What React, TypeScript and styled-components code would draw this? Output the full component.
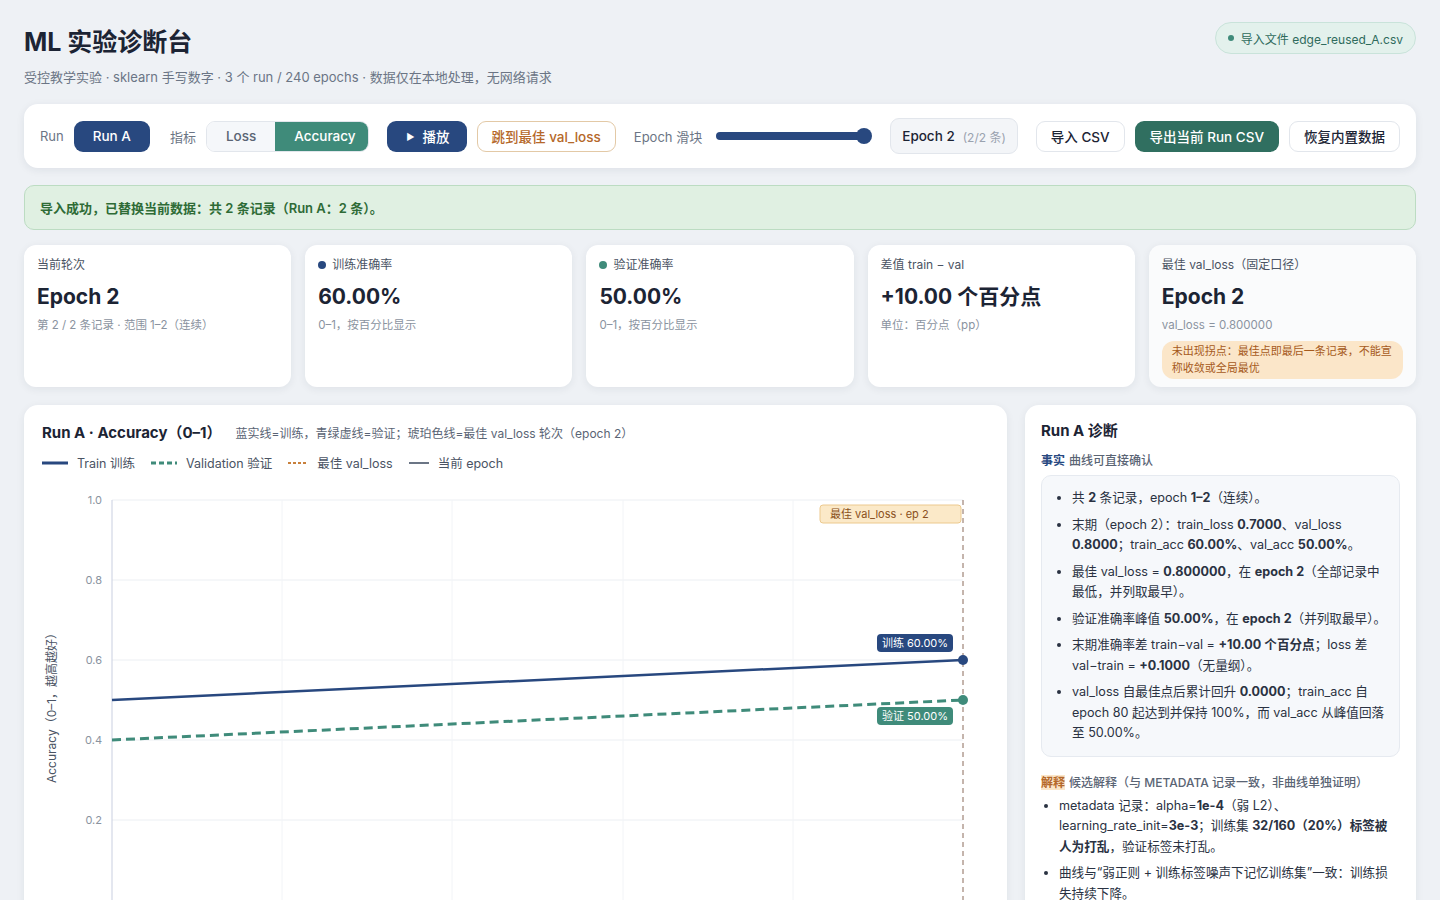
import React from "react";
import styled, { createGlobalStyle } from "styled-components";

const Global = createGlobalStyle`
  html, body { margin: 0; padding: 0; background: #eef1f5; height: 900px; overflow: hidden; }
  body { font-family: Inter, "Noto Sans CJK SC", sans-serif; color: #1c2434; }
  * { box-sizing: border-box; }
`;

const Page = styled.div`
  padding: 26px 24px 0 24px;
  display: flex;
  flex-direction: column;
`;
const Header = styled.div`
  display: flex;
  justify-content: space-between;
  align-items: flex-start;
`;
const Title = styled.h1`
  margin: 0;
  font-size: 25px;
  font-weight: 700;
  color: #1c2434;
  line-height: 32px;
`;
const Sub = styled.div`
  margin-top: 10px;
  font-size: 13px;
  line-height: 18px;
  color: #6b7585;
`;
const FilePill = styled.div`
  margin-top: -4px;
  display: flex;
  align-items: center;
  gap: 7px;
  height: 32px;
  padding: 0 12px;
  border-radius: 16px;
  background: #e3f1ec;
  border: 1px solid #c9e3da;
  font-size: 12px;
  color: #2f6b5c;
`;
const Dot = styled.span<{ c: string; s?: number }>`
  display: inline-block;
  width: ${(p) => p.s ?? 7}px;
  height: ${(p) => p.s ?? 7}px;
  border-radius: 50%;
  background: ${(p) => p.c};
`;
const Toolbar = styled.div`
  margin-top: 18px;
  height: 64px;
  background: #fff;
  border-radius: 14px;
  box-shadow: 0 2px 8px rgba(30, 40, 60, 0.08);
  display: flex;
  align-items: center;
  padding: 0 16px;
  gap: 10px;
`;
const Label = styled.span<{ ml?: number }>`
  font-size: 13px;
  color: #6b7585;
  white-space: nowrap;
  margin-left: ${(p) => p.ml ?? 0}px;
`;
const Btn = styled.button<{ v: "navy" | "amber" | "white" | "green" | "chip" }>`
  height: 31px;
  padding: 0 14px;
  border-radius: 9px;
  font-family: inherit;
  font-size: 13.5px;
  font-weight: 500;
  white-space: nowrap;
  border: 1px solid
    ${(p) =>
      p.v === "amber" ? "#e3c9a6" : p.v === "white" || p.v === "chip" ? "#e2e6ec" : "transparent"};
  background: ${(p) =>
    p.v === "navy" ? "#28487f" : p.v === "green" ? "#306f60" : p.v === "chip" ? "#f3f5f8" : "#fff"};
  color: ${(p) =>
    p.v === "navy" || p.v === "green" ? "#fff" : p.v === "amber" ? "#b5682a" : "#1c2434"};
  display: flex;
  align-items: center;
  gap: 8px;
`;
const Seg = styled.div`
  display: flex;
  border: 1px solid #e2e6ec;
  border-radius: 9px;
  overflow: hidden;
  height: 31px;
`;
const SegItem = styled.div<{ on?: boolean }>`
  padding: 0 19px;
  display: flex;
  align-items: center;
  font-size: 13.5px;
  font-weight: 500;
  background: ${(p) => (p.on ? "#3f8b7a" : "#f5f7fa")};
  color: ${(p) => (p.on ? "#fff" : "#5a6474")};
`;
const Slider = styled.div`
  position: relative;
  width: 156px;
  height: 8px;
  border-radius: 4px;
  background: #28487f;
  margin: 0 4px 0 4px;
`;
const Thumb = styled.div`
  position: absolute;
  right: -6px;
  top: -4px;
  width: 16px;
  height: 16px;
  border-radius: 50%;
  background: #28487f;
`;
const Muted = styled.span`
  color: #9aa2af;
  font-weight: 400;
  font-size: 12px;
`;
const Alert = styled.div`
  margin-top: 17px;
  height: 45px;
  background: #e0f0e2;
  border: 1px solid #bcdcc2;
  border-radius: 10px;
  display: flex;
  align-items: center;
  padding: 0 15px;
  font-size: 13px;
  font-weight: 600;
  color: #2e6b36;
`;
const Metrics = styled.div`
  margin-top: 15px;
  display: grid;
  grid-template-columns: repeat(5, 1fr);
  gap: 14px;
`;
const Card = styled.div<{ tint?: boolean }>`
  height: 142px;
  background: ${(p) => (p.tint ? "#fafbfc" : "#fff")};
  border-radius: 12px;
  box-shadow: 0 2px 8px rgba(30, 40, 60, 0.07);
  padding: 12px 13px;
`;
const CardLabel = styled.div`
  font-size: 12px;
  line-height: 16px;
  color: #4a5363;
  display: flex;
  align-items: center;
  gap: 6px;
`;
const Big = styled.div`
  margin-top: 10px;
  font-size: 21px;
  line-height: 28px;
  font-weight: 700;
  color: #1c2434;
`;
const Small = styled.div`
  margin-top: 6px;
  font-size: 11.5px;
  line-height: 16px;
  color: #8a93a0;
`;
const Warn = styled.div`
  margin-top: 8px;
  background: #fbe6c9;
  color: #a65a1c;
  font-size: 11px;
  line-height: 17px;
  padding: 2px 10px;
  border-radius: 12px;
`;
const Bottom = styled.div`
  margin-top: 18px;
  display: grid;
  grid-template-columns: 983px 1fr;
  gap: 18px;
`;
const Panel = styled.div`
  background: #fff;
  border-radius: 14px;
  box-shadow: 0 2px 8px rgba(30, 40, 60, 0.07);
  height: 520px;
  overflow: hidden;
`;
const ChartHead = styled.div`
  padding: 18px 18px 0 18px;
  display: flex;
  align-items: baseline;
  gap: 14px;
`;
const H2 = styled.div`
  font-size: 15px;
  line-height: 20px;
  font-weight: 700;
  color: #1c2434;
`;
const Note = styled.span`
  font-size: 12px;
  color: #5a6474;
`;
const Legend = styled.div`
  padding: 10px 18px 0 18px;
  display: flex;
  gap: 16px;
  font-size: 12.5px;
  color: #4a5363;
`;
const LegItem = styled.span`
  display: flex;
  align-items: center;
  gap: 9px;
`;
const Diag = styled.div`
  padding: 16px 16px;
`;
const Tag = styled.div`
  margin-top: 10px;
  font-size: 12px;
  color: #5a6474;
  font-weight: 500;
`;
const TagWord = styled.b<{ c: string; bg?: string }>`
  color: ${(p) => p.c};
  background: ${(p) => p.bg ?? "transparent"};
  margin-right: 4px;
`;
const FactBox = styled.div`
  margin-top: 7px;
  background: #f6f8fb;
  border: 1px solid #e6eaf0;
  border-radius: 10px;
  padding: 6px 10px 6px 18px;
`;
const UL = styled.ul<{ pl?: number }>`
  margin: 0;
  padding-left: ${(p) => p.pl ?? 12}px;
  font-size: 12.6px;
  line-height: 20.5px;
  color: #2a3242;
  li { margin: 6px 0; }
  b { font-weight: 700; }
`;

function Chart() {
  const x0 = 88, x1 = 939;
  const y = (v: number) => 20 + (1 - v) * 400;
  const grid = [1, 0.8, 0.6, 0.4, 0.2];
  const vx = [258, 428, 599, 769];
  return (
    <svg width="982" height="440" style={{ display: "block", marginTop: 8 }}>
      {grid.map((g) => (
        <g key={g}>
          <line x1={x0} x2={x1} y1={y(g)} y2={y(g)} stroke="#eceff3" />
          <text x={x0 - 10} y={y(g) + 4} fontSize="11" fill="#8a93a0" textAnchor="end" fontFamily="Inter">
            {g.toFixed(1)}
          </text>
        </g>
      ))}
      {vx.map((v) => (
        <line key={v} x1={v} x2={v} y1={20} y2={440} stroke="#f2f4f7" />
      ))}
      <line x1={x0} x2={x0} y1={20} y2={440} stroke="#c9cfe0" />
      <text transform="translate(32 225) rotate(-90)" textAnchor="middle" fontSize="12" fill="#4a5363" fontFamily="Inter, 'Noto Sans CJK SC'">
        Accuracy（0–1，越高越好）
      </text>
      <line x1={x1} x2={x1} y1={20} y2={440} stroke="#8a6a5a" strokeDasharray="5 4" />
      <line x1={x0} y1={y(0.5)} x2={x1} y2={y(0.6)} stroke="#28487f" strokeWidth="2.5" />
      <line x1={x0} y1={y(0.4)} x2={x1} y2={y(0.5)} stroke="#3f8b7a" strokeWidth="3" strokeDasharray="9 5" />
      <circle cx={x1} cy={y(0.6)} r="5" fill="#28487f" />
      <circle cx={x1} cy={y(0.5)} r="5" fill="#3f8b7a" />
      <rect x={796} y={25} width={141} height={18} rx="3" fill="#fbe9c8" stroke="#ecc98e" />
      <text x={806} y={38} fontSize="11" fill="#8a5020" fontFamily="Inter, 'Noto Sans CJK SC'">最佳 val_loss · ep 2</text>
      <rect x={853} y={154} width={76} height={18} rx="4" fill="#28487f" />
      <text x={891} y={167} fontSize="11" fill="#fff" textAnchor="middle" fontFamily="Inter, 'Noto Sans CJK SC'">训练 60.00%</text>
      <rect x={853} y={227} width={76} height={18} rx="4" fill="#3f8b7a" />
      <text x={891} y={240} fontSize="11" fill="#fff" textAnchor="middle" fontFamily="Inter, 'Noto Sans CJK SC'">验证 50.00%</text>
    </svg>
  );
}

export default function App() {
  return (
    <>
      <Global />
      <Page>
        <Header>
          <div>
            <Title>ML 实验诊断台</Title>
            <Sub>受控教学实验 · sklearn 手写数字 · 3 个 run / 240 epochs · 数据仅在本地处理，无网络请求</Sub>
          </div>
          <FilePill>
            <Dot c="#3f8b7a" s={6} />导入文件 edge_reused_A.csv
          </FilePill>
        </Header>
        <Toolbar>
          <Label>Run</Label>
          <Btn v="navy" style={{ padding: "0 18px" }}>Run A</Btn>
          <Label ml={10}>指标</Label>
          <Seg>
            <SegItem>Loss</SegItem>
            <SegItem on>Accuracy</SegItem>
          </Seg>
          <Btn v="navy" style={{ marginLeft: 8, paddingLeft: 18, paddingRight: 16 }}>
            <span style={{ fontSize: 9 }}>▶</span>播放
          </Btn>
          <Btn v="amber">跳到最佳 val_loss</Btn>
          <Label ml={8}>Epoch 滑块</Label>
          <Slider>
            <Thumb />
          </Slider>
          <Btn v="chip" style={{ height: 36, marginLeft: 10, padding: "0 11px" }}>
            Epoch 2 <Muted>(2/2 条)</Muted>
          </Btn>
          <Btn v="white" style={{ marginLeft: 8 }}>导入 CSV</Btn>
          <Btn v="green">导出当前 Run CSV</Btn>
          <Btn v="white">恢复内置数据</Btn>
        </Toolbar>
        <Alert>导入成功，已替换当前数据：共 2 条记录（Run A：2 条）。</Alert>
        <Metrics>
          <Card>
            <CardLabel>当前轮次</CardLabel>
            <Big>Epoch 2</Big>
            <Small>第 2 / 2 条记录 · 范围 1–2（连续）</Small>
          </Card>
          <Card>
            <CardLabel><Dot c="#28487f" s={8} />训练准确率</CardLabel>
            <Big>60.00%</Big>
            <Small>0–1，按百分比显示</Small>
          </Card>
          <Card>
            <CardLabel><Dot c="#3f8b7a" s={8} />验证准确率</CardLabel>
            <Big>50.00%</Big>
            <Small>0–1，按百分比显示</Small>
          </Card>
          <Card>
            <CardLabel>差值 train − val</CardLabel>
            <Big>+10.00 个百分点</Big>
            <Small>单位：百分点（pp）</Small>
          </Card>
          <Card tint>
            <CardLabel>最佳 val_loss（固定口径）</CardLabel>
            <Big>Epoch 2</Big>
            <Small>val_loss = 0.800000</Small>
            <Warn>未出现拐点：最佳点即最后一条记录，不能宣称收敛或全局最优</Warn>
          </Card>
        </Metrics>
        <Bottom>
          <Panel>
            <ChartHead>
              <H2>Run A · Accuracy（0–1）</H2>
              <Note>蓝实线=训练，青绿虚线=验证；琥珀色线=最佳 val_loss 轮次（epoch 2）</Note>
            </ChartHead>
            <Legend>
              <LegItem>
                <svg width="26" height="4"><line x1="0" x2="26" y1="2" y2="2" stroke="#28487f" strokeWidth="3" /></svg>Train 训练
              </LegItem>
              <LegItem>
                <svg width="26" height="4"><line x1="0" x2="26" y1="2" y2="2" stroke="#3f8b7a" strokeWidth="3" strokeDasharray="5 3" /></svg>Validation 验证
              </LegItem>
              <LegItem>
                <svg width="20" height="4"><line x1="0" x2="20" y1="2" y2="2" stroke="#c8803c" strokeWidth="2" strokeDasharray="3 2" /></svg>最佳 val_loss
              </LegItem>
              <LegItem>
                <svg width="20" height="4"><line x1="0" x2="20" y1="2" y2="2" stroke="#6b7585" strokeWidth="2" /></svg>当前 epoch
              </LegItem>
            </Legend>
            <Chart />
          </Panel>
          <Panel>
            <Diag>
              <H2>Run A 诊断</H2>
              <Tag><TagWord c="#28487f">事实</TagWord>曲线可直接确认</Tag>
              <FactBox>
                <UL>
                  <li>共 <b>2</b> 条记录，epoch <b>1–2</b>（连续）。</li>
                  <li>末期（epoch 2）：train_loss <b>0.7000</b>、val_loss <b>0.8000</b>；train_acc <b>60.00%</b>、val_acc <b>50.00%</b>。</li>
                  <li>最佳 val_loss = <b>0.800000</b>，在 <b>epoch 2</b>（全部记录中最低，并列取最早）。</li>
                  <li>验证准确率峰值 <b>50.00%</b>，在 <b>epoch 2</b>（并列取最早）。</li>
                  <li>末期准确率差 train−val = <b>+10.00 个百分点</b>；loss 差 val−train = <b>+0.1000</b>（无量纲）。</li>
                  <li>val_loss 自最佳点后累计回升 <b>0.0000</b>；train_acc 自 epoch 80 起达到并保持 100%，而 val_acc 从峰值回落至 50.00%。</li>
                </UL>
              </FactBox>
              <Tag style={{ marginTop: 16 }}><TagWord c="#b5682a" bg="#fbe6c9">解释</TagWord>候选解释（与 METADATA 记录一致，非曲线单独证明）</Tag>
              <UL pl={18} style={{ marginTop: 6 }}>
                <li>metadata 记录：alpha=<b>1e-4</b>（弱 L2）、learning_rate_init=<b>3e-3</b>；训练集 <b>32/160（20%）标签被人为打乱</b>，验证标签未打乱。</li>
                <li>曲线与“弱正则 + 训练标签噪声下记忆训练集”一致：训练损失持续下降。</li>
              </UL>
            </Diag>
          </Panel>
        </Bottom>
      </Page>
    </>
  );
}
